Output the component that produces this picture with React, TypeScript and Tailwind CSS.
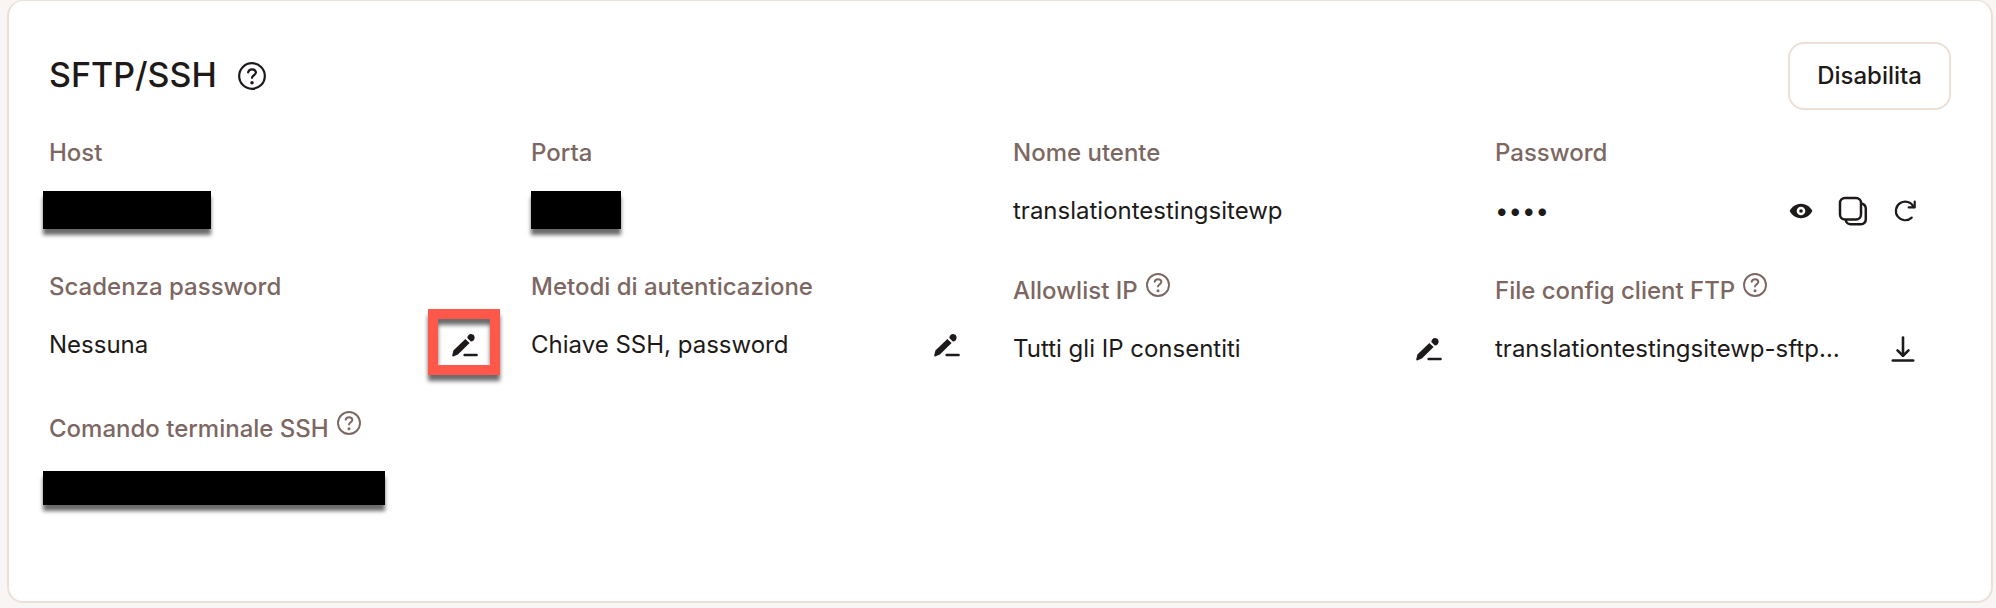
import type { ReactNode } from "react";

function HelpIcon({ className }: { className: string }) {
  return (
    <svg viewBox="0 0 24 24" fill="none" stroke="currentColor" className={className}>
      <circle cx="12" cy="12" r="11" strokeWidth="1.9" />
      <path d="M8.7 8.8a3.4 3 0 0 1 6.7 0c0 2.6-3.4 2.5-3.4 4.800" strokeWidth="1.9" strokeLinecap="round" />
      <circle cx="12" cy="17.7" r="1.5" fill="currentColor" stroke="none" />
    </svg>
  );
}

function PenIcon() {
  return (
    <svg viewBox="0 0 28 28" fill="currentColor" className="size-7">
      <path d="M2.3 24.1 3.4 19.6 15.3 7.9 19.6 12 7.9 23.4 3.2 25.4Q1.9 25.6 2.3 24.1Z" />
      <path d="M17.3 7.1Q17.5 3.3 21.2 3Q24.6 3.4 24.6 6.7Q24.3 10.3 20.8 10.6Z" />
      <rect x="13.4" y="22.8" width="14.4" height="2.4" rx="1.2" />
    </svg>
  );
}

function EyeIcon() {
  return (
    <svg viewBox="0 0 24 24" className="size-6">
      <path
        d="M.7 12c1-2.800 5.500-7.200 11.300-7.200S22.300 9.200 23.300 12c-1 2.800-5.500 7.200-11.300 7.200S1.700 14.800.7 12Z"
        fill="currentColor"
      />
      <circle cx="12" cy="12" r="4.300" fill="white" />
      <circle cx="12" cy="12" r="1.800" fill="currentColor" />
    </svg>
  );
}

function CopyIcon() {
  return (
    <svg viewBox="0 0 30 30" fill="none" stroke="currentColor" strokeWidth="2.5" className="size-[30px]">
      <rect x="2" y="2" width="21" height="21.500" rx="5" />
      <path d="M23 7.600a4.800 4.800 0 0 1 4.800 4.800v11.100a4.800 4.800 0 0 1-4.800 4.800H12.600a4.800 4.800 0 0 1-4.800-4.800" />
    </svg>
  );
}

function RefreshIcon() {
  return (
    <svg
      viewBox="0 0 24 24"
      fill="none"
      stroke="currentColor"
      strokeWidth="2.2"
      strokeLinecap="round"
      strokeLinejoin="round"
      className="size-6"
    >
      <path d="M18.700 18.600A9.300 9.300 0 1 1 20.600 8" />
      <path d="M21.700 2.600v5.800h-6" />
    </svg>
  );
}

function DownloadIcon() {
  return (
    <svg
      viewBox="0 0 24 26"
      fill="none"
      stroke="currentColor"
      strokeWidth="2.6"
      strokeLinecap="round"
      strokeLinejoin="round"
      className="h-[26px] w-6"
    >
      <path d="M12 1.600v18" />
      <path d="m6.500 14.400 5.500 5.400 5.500-5.400" />
      <path d="M1.800 24.500h20.400" />
    </svg>
  );
}

function IconButton({ label, children }: { label: string; children: ReactNode }) {
  return (
    <button type="button" aria-label={label} className="relative shrink-0 cursor-pointer">
      {children}
    </button>
  );
}

function Redacted({ className }: { className: string }) {
  return (
    <div className="flex h-9 items-end">
      <div className={`shrink-0 bg-black shadow-[0_6px_4px_rgba(0,0,0,0.58)] ${className}`} />
    </div>
  );
}

type FieldProps = {
  label: string;
  help?: boolean;
  actions?: ReactNode;
  children: ReactNode;
};

function Field({ label, help, actions, children }: FieldProps) {
  return (
    <div className="min-w-0">
      <dt
        className={
          help
            ? "flex items-start gap-2 pt-1 font-medium text-[#7d6762]"
            : "font-medium text-[#7d6762]"
        }
      >
        {label}
        {help && (
          <button type="button" aria-label={`Aiuto: ${label}`} className="cursor-pointer">
            <HelpIcon className="size-6" />
          </button>
        )}
      </dt>
      <dd className="mt-[22px] flex h-9 items-center justify-between">
        <div className="min-w-0 whitespace-nowrap">{children}</div>
        {actions}
      </dd>
    </div>
  );
}

export default function App() {
  return (
    <main className="min-h-screen bg-[#f9f5f4] pr-[3px] pb-[5px] pl-[7px] font-['Inter',sans-serif] text-2xl/9 text-[#1d1a19]">
      <section className="rounded-2xl border-2 border-t border-[#ebe0d8] bg-white px-10 pt-[41px] pb-24">
        <header className="flex items-center justify-between">
          <div className="flex items-center gap-[21px]">
            <h2 className="pb-0.5 text-[34px]/10 font-medium">SFTP/SSH</h2>
            <button type="button" aria-label="Aiuto: SFTP/SSH" className="cursor-pointer">
              <HelpIcon className="size-7" />
            </button>
          </div>
          <button
            type="button"
            className="h-17 cursor-pointer rounded-2xl border-2 border-[#ebe0d8] px-[27px] font-medium"
          >
            Disabilita
          </button>
        </header>

        <dl className="mt-[25px] grid grid-cols-4 gap-x-[26px] gap-y-10">
          <Field label="Host">
            <Redacted className="-ml-1.5 h-[38px] w-[168px]" />
          </Field>
          <Field label="Porta">
            <Redacted className="h-[38px] w-[90px]" />
          </Field>
          <Field label="Nome utente">translationtestingsitewp</Field>
          <Field
            label="Password"
            actions={
              <div className="flex items-center gap-[25px] pr-[34px]">
                <IconButton label="Mostra password">
                  <EyeIcon />
                </IconButton>
                <IconButton label="Copia password">
                  <CopyIcon />
                </IconButton>
                <IconButton label="Rigenera password">
                  <RefreshIcon />
                </IconButton>
              </div>
            }
          >
            ••••
          </Field>

          <Field
            label="Scadenza password"
            actions={
              <div className="flex pr-[27px]">
                <IconButton label="Modifica scadenza password">
                  <PenIcon />
                  <span className="absolute -inset-[22px] -bottom-4 border-10 border-[#ff574a] drop-shadow-[0_6px_2px_rgba(0,0,0,0.58)]" />
                </IconButton>
              </div>
            }
          >
            Nessuna
          </Field>
          <Field
            label="Metodi di autenticazione"
            actions={
              <div className="flex pr-[27px]">
                <IconButton label="Modifica metodi di autenticazione">
                  <PenIcon />
                </IconButton>
              </div>
            }
          >
            Chiave SSH, password
          </Field>
          <Field
            label="Allowlist IP"
            help
            actions={
              <div className="flex pr-[27px]">
                <IconButton label="Modifica allowlist IP">
                  <PenIcon />
                </IconButton>
              </div>
            }
          >
            Tutti gli IP consentiti
          </Field>
          <Field
            label="File config client FTP"
            help
            actions={
              <div className="flex pr-9">
                <IconButton label="Scarica file config">
                  <DownloadIcon />
                </IconButton>
              </div>
            }
          >
            translationtestingsitewp-sftp…
          </Field>

          <Field label="Comando terminale SSH" help>
            <Redacted className="-ml-1.5 h-[34px] w-[342px]" />
          </Field>
        </dl>
      </section>
    </main>
  );
}
